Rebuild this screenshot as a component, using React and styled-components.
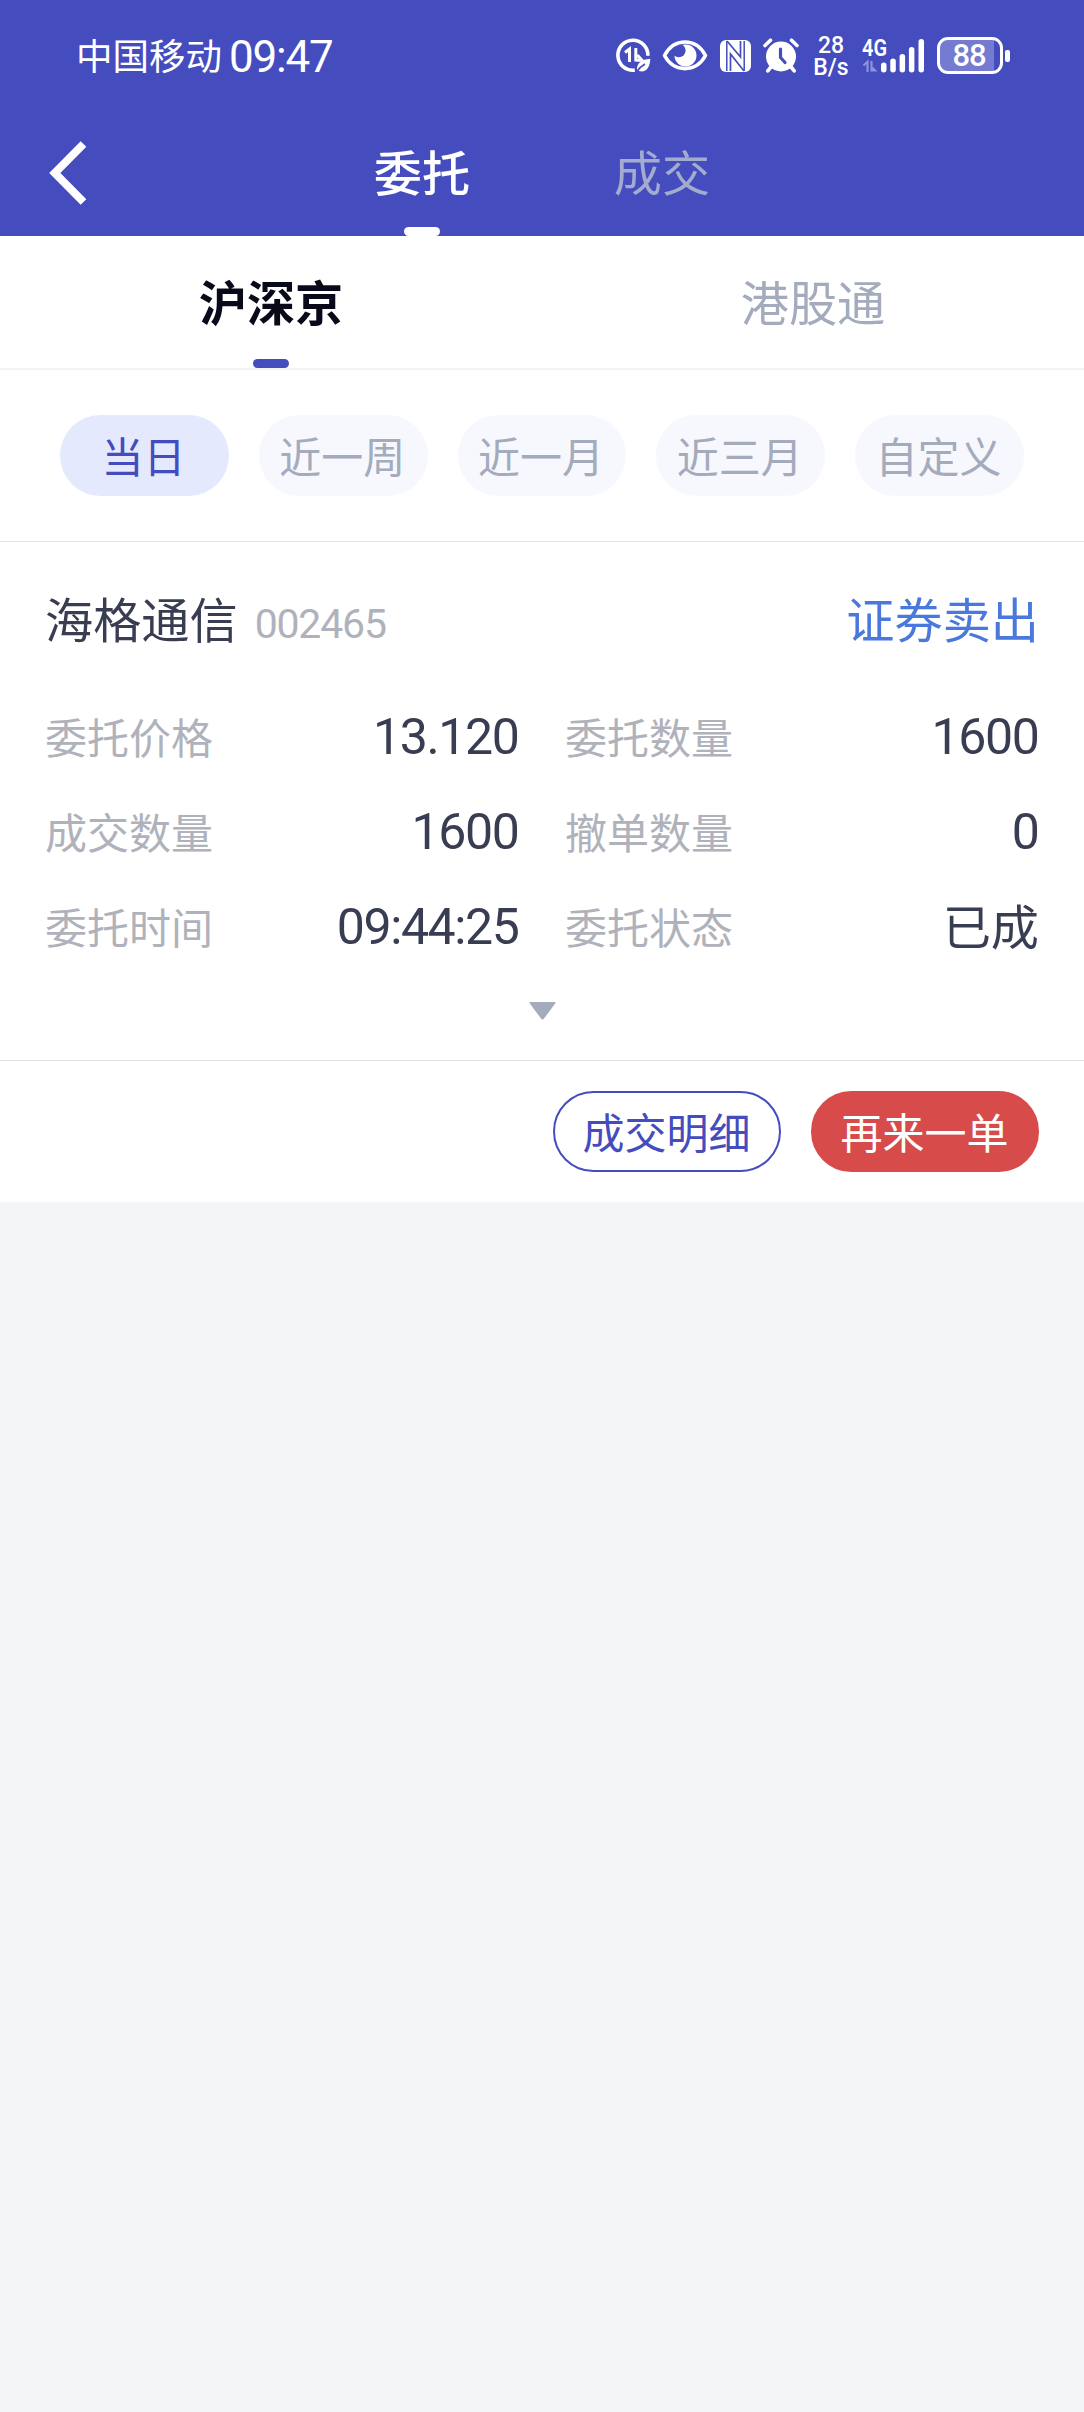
import React from "react";
import styled, { createGlobalStyle } from "styled-components";

const sans = `"Noto Sans CJK SC", "Noto Sans", sans-serif`;
const digits = `Roboto, "Noto Sans CJK SC", sans-serif`;
const brand = "#444cbe";

const Global = createGlobalStyle`
  *, *::before, *::after { box-sizing: border-box; }
  body { margin: 0; background: #f3f5f7; font-family: ${sans}; }
  button { font: inherit; border: 0; padding: 0; margin: 0; background: none; }
`;

const Screen = styled.div`
  width: 1084px;
  min-height: 2412px;
  background: #f3f5f7;
`;

const Header = styled.header`
  height: 236px;
  background: ${brand};
  color: #fff;
`;

const StatusBar = styled.div`
  height: 110px;
  padding: 1px 74px 0 76px;
  display: flex;
  align-items: center;
  justify-content: space-between;
`;

const StatusLeft = styled.div`
  display: flex;
  align-items: center;
  gap: 7px;
`;

const Carrier = styled.span`
  font-size: 36.5px;
  line-height: 52px;
  padding-bottom: 1px;
  font-weight: 400;
`;

const Clock = styled.span`
  font-family: ${digits};
  font-size: 44px;
  line-height: 52px;
  padding-top: 2px;
  font-weight: 400;
  letter-spacing: -1.2px;
`;

const StatusRight = styled.div`
  display: flex;
  align-items: center;
  svg { display: block; }
`;

const Slot = styled.span`
  display: block;
  margin-left: ${(p) => p.$left}px;
`;

const NetSpeed = styled.span`
  width: 36px;
  margin-left: 14px;
  padding-top: 2px;
  font-family: ${digits};
  font-size: 23px;
  font-weight: 500;
  line-height: 22px;
  text-align: center;
  display: flex;
  flex-direction: column;
`;

const Battery = styled.span`
  width: 66px;
  height: 37px;
  margin-left: 11px;
  border: 3px solid #fff;
  border-radius: 11px;
  display: flex;
  align-items: center;
  justify-content: center;
  font-family: ${digits};
  font-size: 31px;
  font-weight: 500;
  letter-spacing: -1.2px;
  padding-right: 2px;
  line-height: 31px;
  background: linear-gradient(90deg, #757bd0 0 54px, transparent 54px);
`;

const BatteryCap = styled.span`
  width: 5px;
  height: 12px;
  margin-left: 2px;
  border-radius: 2px;
  background: #fff;
`;

const NavBar = styled.nav`
  height: 126px;
  display: grid;
  grid-template-columns: 302px 480px 302px;
`;

const Back = styled.button`
  color: #fff;
  padding-left: 49px;
  display: flex;
  align-items: center;
`;

const NavTabs = styled.div`
  display: grid;
  grid-template-columns: 1fr 1fr;
`;

const Tab = styled.button`
  display: flex;
  flex-direction: column;
  align-items: center;
  justify-content: space-between;
  font-size: 48.18px;
  line-height: 70px;
  padding-top: ${(p) => p.$top}px;
  font-weight: ${(p) => p.$weight || 400};
  color: ${(p) => p.$color};
`;

const Indicator = styled.span`
  width: 36px;
  height: 9px;
  border-radius: 4.5px;
  background: ${(p) => p.$color};
`;

const MarketTabs = styled.div`
  height: 134px;
  background: #fff;
  border-bottom: 2px solid #f3f3f4;
  display: grid;
  grid-template-columns: 1fr 1fr;
`;

const Ranges = styled.div`
  height: 172px;
  padding: 45px 60px;
  background: #fff;
  border-bottom: 1px solid #e3e3e3;
  display: grid;
  grid-template-columns: repeat(5, 1fr);
  column-gap: 30px;
`;

const Chip = styled.button`
  height: 81px;
  padding: 0 2px 2px 0;
  border-radius: 40.5px;
  font-size: 42px;
  line-height: 79px;
  color: ${(p) => (p.$active ? brand : "#a3abbd")};
  background: ${(p) => (p.$active ? "#e5e9fe" : "#f6f8fd")};
`;

const Order = styled.section`
  height: 519px;
  padding: 40px 45px 0;
  background: #fff;
  border-bottom: 1px solid #e3e3e3;
`;

const OrderHead = styled.div`
  height: 70px;
  display: flex;
  align-items: center;
  color: #383d52;
  font-size: 48.18px;
  line-height: 70px;
`;

const Code = styled.span`
  flex: 1;
  margin-left: 17px;
  padding-top: 14px;
  font-family: ${digits};
  font-size: 41px;
  letter-spacing: -1.2px;
  color: #b0b2bb;
`;

const Side = styled.span`
  color: #4a78dc;
`;

const Fields = styled.div`
  margin-top: 37px;
  display: grid;
  grid-template-columns: 1fr 1fr;
  grid-auto-rows: 95px;
  column-gap: 46px;
`;

const Field = styled.div`
  display: flex;
  align-items: center;
  justify-content: space-between;
`;

const Label = styled.span`
  font-size: 42px;
  line-height: 60px;
  padding-bottom: 1px;
  color: #b0b2bb;
`;

const Value = styled.span`
  font-family: ${digits};
  font-size: 50px;
  line-height: 60px;
  letter-spacing: -1.4px;
  margin-right: 0.6px;
  color: #383d52;
`;

const TextValue = styled(Value)`
  font-family: ${sans};
  font-size: 48.18px;
  padding-bottom: 6px;
  letter-spacing: 0;
  margin-right: 0;
`;

const Expand = styled.div`
  margin-top: 28px;
  display: flex;
  justify-content: center;
  svg { display: block; }
`;

const Actions = styled.div`
  height: 141px;
  padding-right: 45px;
  background: #fff;
  display: flex;
  align-items: center;
  justify-content: flex-end;
  gap: 30px;
`;

const Action = styled.button`
  width: 228px;
  height: 81px;
  padding: 0 1px 2px 0;
  border-radius: 40.5px;
  border: 2px solid ${(p) => (p.$primary ? "#d84b4b" : brand)};
  background: ${(p) => (p.$primary ? "#d84b4b" : "#fff")};
  color: ${(p) => (p.$primary ? "#fff" : brand)};
  font-size: 42px;
  line-height: 75px;
`;

const DataSaverIcon = () => (
  <svg width="35" height="35" viewBox="0 0 35 35" fill="none" stroke="#fff">
    <path d="M18.8 32.1A15 15 0 1 1 31.9 17.8" strokeWidth="3.6" />
    <path d="M9 14.500l4.500-3.500v13M19.800 10v13.500M20.500 22.300h5.500l-4.800-5.300" strokeWidth="3" />
    <path d="M21 32.500c-.4-7.200 3.600-10.900 13.300-11.700-.3 9.300-4.700 14.300-11.300 12.200z" fill="#fff" stroke="none" />
    <path d="M20 34.500c2.500-3.700 5-6.300 9-8.500" stroke={brand} strokeWidth="1.700" />
  </svg>
);

const EyeIcon = () => (
  <svg width="46" height="33" viewBox="0 0 46 33" fill="none">
    <circle cx="23.500" cy="16.500" r="11" fill="#fff" />
    <circle cx="16.800" cy="11.500" r="6.800" fill={brand} />
    <path d="M2.500 16.500C12 -1.500 34 -1.500 43.500 16.500C34 34 12 34 2.500 16.500Z" stroke="#fff" strokeWidth="3.600" strokeLinejoin="round" />
  </svg>
);

const NfcIcon = () => (
  <svg width="31" height="32" viewBox="0 0 31 32" fill="none">
    <rect width="31" height="32" rx="6" fill="#fff" />
    <path d="M6.800 1v30M24.200 1v30" stroke={brand} strokeWidth="1.500" />
    <path d="M7 1L20.500 17V1M24 31L10.500 14V31" stroke={brand} strokeWidth="1.700" />
  </svg>
);

const AlarmIcon = () => (
  <svg width="36" height="35" viewBox="0 0 36 35" fill="none" strokeLinecap="round">
    <circle cx="18" cy="18.500" r="15" fill="#fff" />
    <path d="M2 7.500L7.500 2.200M34 7.500L28.500 2.200M7.500 29.500L4.800 32.800M28.500 29.500L31.200 32.800" stroke="#fff" strokeWidth="3.600" />
    <path d="M17.500 11v8.500l4.500 5" stroke={brand} strokeWidth="3.200" />
  </svg>
);

const SignalIcon = () => (
  <svg width="64" height="52" viewBox="0 -8 64 52" fill="#fff">
    <text x="0" y="17.500" fontFamily="Roboto, sans-serif" fontSize="23" fontWeight="600" textLength="25" lengthAdjust="spacingAndGlyphs">4G</text>
    <path d="M1.500 27.500l4-3.700v10.200M9.500 23v9.500h3.500l-3-3" fill="none" stroke="#8d92dc" strokeWidth="2.200" />
    <rect x="19" y="24.500" width="5.500" height="10" rx="2.700" />
    <rect x="28.300" y="20.500" width="5.500" height="14" rx="2.700" />
    <rect x="37.600" y="16" width="5.500" height="18.500" rx="2.700" />
    <rect x="46.900" y="9" width="5.500" height="25.500" rx="2.700" />
    <rect x="56.500" y="1" width="5.500" height="33.500" rx="2.700" />
  </svg>
);

const ranges = ["当日", "近一周", "近一月", "近三月", "自定义"];

const fields = [
  ["委托价格", "13.120"],
  ["委托数量", "1600"],
  ["成交数量", "1600"],
  ["撤单数量", "0"],
  ["委托时间", "09:44:25"],
  ["委托状态", "已成", true],
];

export default function App() {
  return (
    <Screen>
      <Global />
      <Header>
        <StatusBar>
          <StatusLeft>
            <Carrier>中国移动</Carrier>
            <Clock>09:47</Clock>
          </StatusLeft>
          <StatusRight>
            <DataSaverIcon />
            <Slot $left={11}><EyeIcon /></Slot>
            <Slot $left={12}><NfcIcon /></Slot>
            <Slot $left={12}><AlarmIcon /></Slot>
            <NetSpeed>
              <span>28</span>
              <span>B/s</span>
            </NetSpeed>
            <Slot $left={13}><SignalIcon /></Slot>
            <Battery>88</Battery>
            <BatteryCap />
          </StatusRight>
        </StatusBar>
        <NavBar>
          <Back aria-label="返回">
            <svg width="38" height="64" viewBox="0 0 38 64" fill="none">
              <path d="M34.500 3L5.800 32L34.500 61" stroke="#fff" strokeWidth="8" />
            </svg>
          </Back>
          <NavTabs>
            <Tab $top={25} $color="#fff" $weight={500}>
              委托
              <Indicator $color="#fff" />
            </Tab>
            <Tab $top={25} $color="#a3abcf">成交</Tab>
          </NavTabs>
        </NavBar>
      </Header>
      <MarketTabs>
        <Tab $top={29} $color="#080a1a" $weight={700}>
          沪深京
          <Indicator $color={brand} />
        </Tab>
        <Tab $top={29} $color="#a3abbd">港股通</Tab>
      </MarketTabs>
      <Ranges>
        {ranges.map((name, i) => (
          <Chip key={name} $active={i === 0}>{name}</Chip>
        ))}
      </Ranges>
      <Order>
        <OrderHead>
          海格通信
          <Code>002465</Code>
          <Side>证券卖出</Side>
        </OrderHead>
        <Fields>
          {fields.map(([label, value, text]) => (
            <Field key={label}>
              <Label>{label}</Label>
              {text ? <TextValue>{value}</TextValue> : <Value>{value}</Value>}
            </Field>
          ))}
        </Fields>
        <Expand>
          <svg width="27" height="18" viewBox="0 0 27 18">
            <path d="M1.500 0h24q1.800 0 .7 1.500L14.800 16.800q-1.300 1.500-2.600 0L.8 1.500Q-.3 0 1.500 0z" fill="#a3abbd" />
          </svg>
        </Expand>
      </Order>
      <Actions>
        <Action>成交明细</Action>
        <Action $primary>再来一单</Action>
      </Actions>
    </Screen>
  );
}
